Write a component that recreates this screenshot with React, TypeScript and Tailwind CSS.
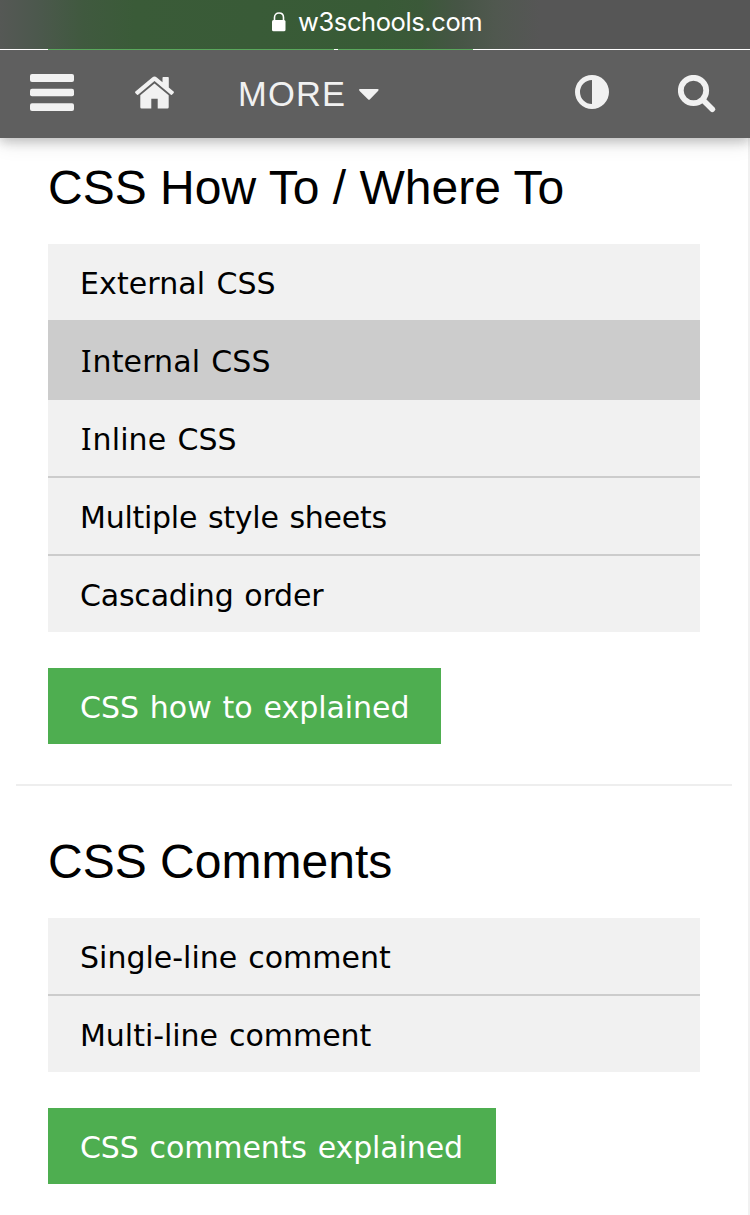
import React from "react";

type SectionProps = { title: string; items: { label: string; spacing: string; active?: boolean }[]; button: string; buttonClass: string };

const verdana = "font-['DejaVu_Sans',sans-serif] [word-spacing:1.5px]";
const serifI = "first-letter:mr-[1px] first-letter:ml-[1px] first-letter:text-[31px] first-letter:font-['Noto_Sans',sans-serif]";

function Section({ title, items, button, buttonClass }: SectionProps) {
  return (
    <section className="px-8">
      <h2 className="h-[72px] whitespace-nowrap font-['Liberation_Sans',sans-serif] text-[48px] leading-[72px] tracking-[0.02px]">{title}</h2>
      <ul className={`mt-5 w-[652px] bg-[#f1f1f1] text-[30px] ${verdana}`}>
        {items.map((item, i) => (
          <li
            key={item.label}
            className={`flex items-center px-8 ${item.active ? "-mt-0.5 h-20 bg-[#cccccc]" : i === items.length - 1 ? "h-[76px]" : i === 0 && items[1].active ? "h-[78px]" : "h-[78px] border-b-2 border-[#cccccc]"}`}
          >
            <span className={`block h-[45px] whitespace-nowrap leading-[45px] ${item.spacing} ${item.label.startsWith("I") ? serifI : "pt-px"} ${i === 0 && items[1].active ? "-mt-0.5" : ""}`}>{item.label}</span>
          </li>
        ))}
      </ul>
      <button className={`mt-9 block h-[76px] bg-[#4eae50] pt-0.5 pl-8 text-left text-[30px] whitespace-nowrap text-white ${verdana} ${buttonClass}`}>{button}</button>
    </section>
  );
}

function Lock() {
  return (
    <svg className="mt-3 ml-[272px] h-5 w-[14px] shrink-0" viewBox="0 0 14 20" fill="none">
      <path d="M2.500 9V5.500C2.500 2.700 4.300 1 7 1s4.500 1.700 4.500 4.500V9" stroke="white" strokeWidth="1.600" />
      <rect y="8" width="13.500" height="11.300" rx="1.600" fill="white" />
    </svg>
  );
}

export default function App() {
  return (
    <div className="flex h-[1215px] w-[750px] flex-col overflow-hidden bg-white text-black">
      <header className="z-10 shrink-0 shadow-[0_4px_10px_rgba(0,0,0,0.18),0_4px_20px_rgba(0,0,0,0.12)]">
        <div className="flex h-[49px] items-start bg-[linear-gradient(to_right,#555855_0%,#4c584d_5%,#40593f_11%,#3a5b38_18%,#385b36_50%,#3b5939_56%,#465545_61%,#50584f_66%,#565656_72%)]">
          <Lock />
          <span className="ml-[12px] font-['Inter',sans-serif] text-[25.5px] leading-[43px] tracking-[-0.4px] whitespace-nowrap text-white">w3schools.com</span>
        </div>
        <div className="flex h-px bg-white pl-12">
          <div className="flex w-[425px] bg-[#5aa85c] pl-[286px]"><i className="w-1 bg-white" /></div>
        </div>
        <nav className="flex h-[88px] items-start bg-[#5f5f5f] text-[#f1f1f1]">
          <svg className="mt-6 ml-[30px] h-[37px] w-11 shrink-0" viewBox="0 0 44 37" fill="currentColor">
            <rect width="44" height="8" rx="2" />
            <rect y="14.700" width="44" height="7.600" rx="2" />
            <rect y="29.300" width="44" height="7.700" rx="2" />
          </svg>
          <svg className="mt-[26px] ml-[61px] h-[33px] w-[39px] shrink-0" viewBox="0 0 39 33" fill="currentColor">
            <path d="M5.300 19.300 19.500 7.500 33.700 19.300V31.200Q33.700 32.500 32.400 32.500H22.700V22.700H16.300V32.500H6.600Q5.300 32.500 5.300 31.200Z" />
            <path d="M17.200 1.500Q19.500-.4 21.800 1.500L27.500 6.300V1.800Q27.500 1 28.300 1H33Q33.800 1 33.800 1.800V11.500L38.600 15.600Q39.200 16.200 38.700 16.900L37.200 18.600Q36.600 19.200 35.900 18.700L19.500 5 3.100 18.700Q2.400 19.200 1.800 18.600L.3 16.900Q-.2 16.200.4 15.600Z" />
          </svg>
          <div className="mt-[22px] ml-16 flex w-[142px] shrink-0 items-start">
            <span className="w-[109px] font-['Liberation_Sans',sans-serif] text-[34.500px] leading-[44px] tracking-[1.2px]">MORE</span>
            <svg className="mt-[17px] ml-3 h-[11px] w-5 shrink-0" viewBox="0 0 20 11" fill="currentColor"><path d="M1 0H18.500Q20.500.3 19 2L11 10.200Q10 11.400 9 10.200L.6 2Q-.7.4 1 0Z" /></svg>
          </div>
          <svg className="mt-[25px] ml-[195px] h-[34px] w-[34px] shrink-0" viewBox="0 0 34 34" fill="currentColor">
            <path fillRule="evenodd" d="M17 0a17 17 0 1 1 0 34a17 17 0 0 1 0-34ZM17 5a12 12 0 0 0 0 24Z" />
          </svg>
          <svg className="mt-[25px] ml-[69px] h-[38px] w-[38px] shrink-0" viewBox="0 0 38 38" fill="none" stroke="currentColor">
            <circle cx="15.500" cy="15.500" r="12.700" strokeWidth="5.800" />
            <path d="m26 26 8.300 8.300" strokeWidth="5.600" strokeLinecap="round" />
          </svg>
        </nav>
      </header>
      <main className="grow border-r-2 border-[#f1f1f1] px-4 pt-[14px]">
        <Section
          title="CSS How To / Where To"
          items={[
            { label: "External CSS", spacing: "tracking-[0.1px]" },
            { label: "Internal CSS", spacing: "tracking-[0.1px]", active: true },
            { label: "Inline CSS", spacing: "tracking-[0.1px]" },
            { label: "Multiple style sheets", spacing: "tracking-[-0.25px]" },
            { label: "Cascading order", spacing: "tracking-[-0.2px]" },
          ]}
          button="CSS how to explained"
          buttonClass="w-[393px] tracking-[-0.05px]"
        />
        <hr className="mt-10 mb-[40px] w-[716px] border-t-2 border-[#eeeeee]" />
        <Section
          title="CSS Comments"
          items={[
            { label: "Single-line comment", spacing: "tracking-[0px]" },
            { label: "Multi-line comment", spacing: "tracking-[-0.03px]" },
          ]}
          button="CSS comments explained"
          buttonClass="w-[448px] tracking-[-0.12px]"
        />
      </main>
    </div>
  );
}
